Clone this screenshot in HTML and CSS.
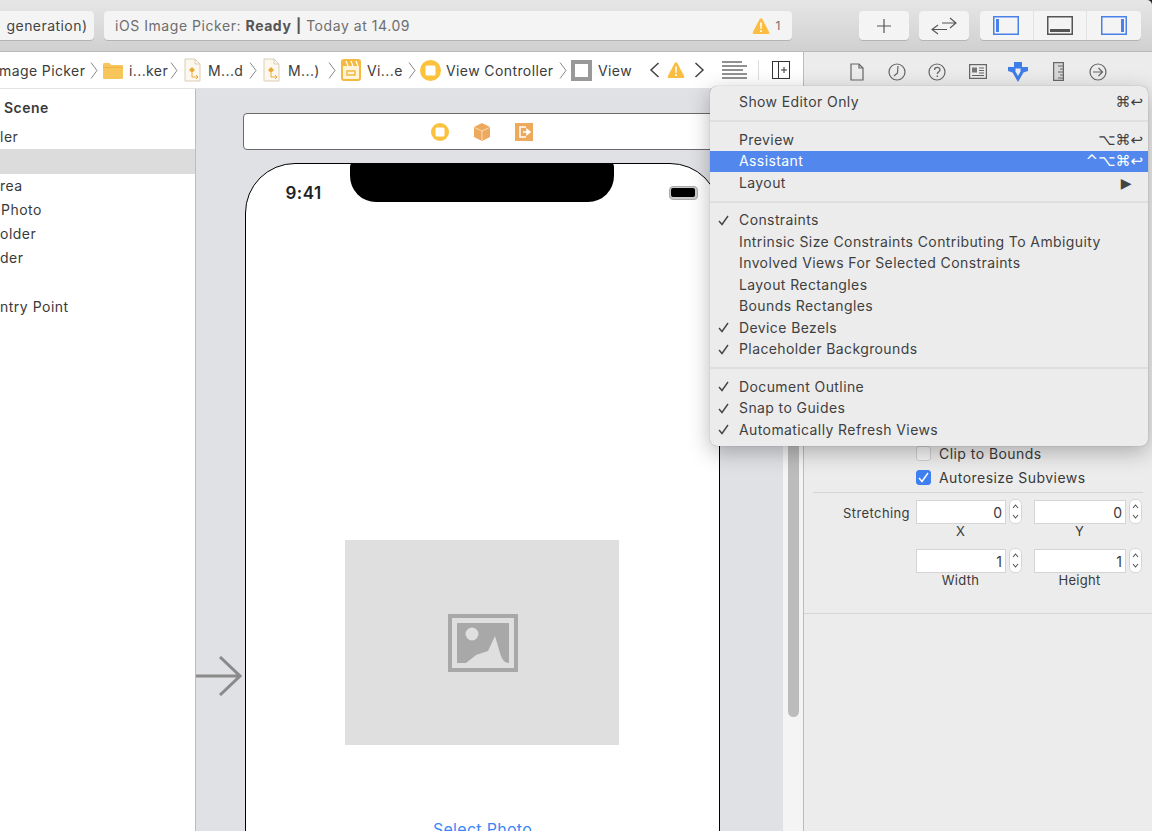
FILE: index.html
```html
<!DOCTYPE html>
<html lang="en">
<head>
  <meta charset="UTF-8">
  <title>Main.storyboard</title>
  <link rel="stylesheet" href="styles.css">
</head>
<body>
<svg class="defs" width="0" height="0">
  <symbol id="chev" viewBox="0 0 8 17"><path d="M1 .5l6 8-6 8" fill="none" stroke="#8a8a8a" stroke-width="1"/></symbol>
  <symbol id="warn" viewBox="0 0 18 18"><path d="M9 1.2c.6 0 1 .3 1.3.8l6.8 12.900c.5 1-.1 2.100-1.200 2.100H2.100c-1.100 0-1.700-1.100-1.200-2.100L7.700 2c.3-.5.700-.8 1.300-.8z" fill="#fbbd3f"/><path d="M8.100 5.500h1.800l-.3 6.500H8.400zM8.100 13.200h1.800v1.800H8.100z" fill="#fff"/></symbol>
  <symbol id="file" viewBox="0 0 17 24"><path d="M1 1h10l5 5v17H1z" fill="#fdf8ee" stroke="#d9cdb8"/><path d="M11 1v5h5" fill="none" stroke="#d9cdb8"/><path d="M8 9l3 3-3 3-3-3z" fill="#e9a93a"/><path d="M8 15v4h6M12 17l2 2-2 2" fill="none" stroke="#e9a93a" stroke-width="1"/></symbol>
  <symbol id="tick" viewBox="0 0 11 11"><path d="M1 6l3 3.500L10 1" fill="none" stroke="#444" stroke-width="1.400"/></symbol>
  <symbol id="updown" viewBox="0 0 13 25"><rect x=".5" y=".5" width="12" height="24" rx="5" fill="#fff" stroke="#d4d4d4"/><path d="M4 9l2.500-3L9 9M4 16l2.500 3L9 16" fill="none" stroke="#555" stroke-width="1.100"/></symbol>
</svg>

<div class="window">
  <header class="toolbar">
    <div class="tool-btn scheme">generation)</div>
    <div class="tool-btn status">
      <span>iOS Image Picker: <b>Ready</b> <b>|</b> Today at 14.09</span>
      <span class="status-warn"><svg width="18" height="18"><use href="#warn"/></svg><span>1</span></span>
    </div>
    <div class="tool-btn square">
      <svg width="18" height="18" viewBox="0 0 18 18"><path d="M9 2v14M2 9h14" stroke="#555" stroke-width="1.200"/></svg>
    </div>
    <div class="tool-btn square">
      <svg width="28" height="20" viewBox="0 0 28 20"><path d="M12 7h14M20 2l6 5-6 5M17 13.500H2M8 9L2 13.500 8 18" fill="none" stroke="#555" stroke-width="1.100"/></svg>
    </div>
    <div class="tool-btn view-group">
      <div class="view-cell">
        <svg width="26" height="19" viewBox="0 0 26 19"><rect x=".75" y=".75" width="24.500" height="17.500" fill="none" stroke="#4a80ea" stroke-width="1.500"/><rect x="3" y="3" width="3" height="13" fill="#4a80ea"/></svg>
      </div>
      <div class="view-cell">
        <svg width="26" height="19" viewBox="0 0 26 19"><rect x=".75" y=".75" width="24.500" height="17.500" fill="none" stroke="#555" stroke-width="1.500"/><rect x="3" y="13" width="20" height="3" fill="#555"/></svg>
      </div>
      <div class="view-cell">
        <svg width="26" height="19" viewBox="0 0 26 19"><rect x=".75" y=".75" width="24.500" height="17.500" fill="none" stroke="#4a80ea" stroke-width="1.500"/><rect x="20" y="3" width="3" height="13" fill="#4a80ea"/></svg>
      </div>
    </div>
  </header>

  <div class="workspace">
    <section class="editor">
      <nav class="jumpbar">
        <span class="crumb-first">mage Picker</span>
        <svg width="8" height="17"><use href="#chev"/></svg>
        <svg class="folder" width="20" height="17" viewBox="0 0 20 17"><path d="M0 2.500C0 1.500.5 1 1.500 1h5l1.500 2h10.500c1 0 1.500.5 1.500 1.500v11c0 1-.5 1.500-1.500 1.500h-17C.5 17 0 16.500 0 15.500z" fill="#f8c55a"/><path d="M0 5h20v1H0z" fill="#eeb443"/></svg>
        <span class="crumb-short">i...ker</span>
        <svg width="8" height="17"><use href="#chev"/></svg>
        <svg class="file" width="17" height="24"><use href="#file"/></svg>
        <span class="crumb-file">M...d</span>
        <svg width="8" height="17"><use href="#chev"/></svg>
        <svg class="file" width="17" height="24"><use href="#file"/></svg>
        <span class="crumb-file wide">M...)</span>
        <svg width="8" height="17"><use href="#chev"/></svg>
        <svg class="board" width="20" height="22" viewBox="0 0 20 22"><rect x="1" y="1" width="18" height="20" rx="2" fill="#fff4d8" stroke="#f4b93f" stroke-width="2"/><path d="M1 2h18v5H1z" fill="#f4b93f"/><path d="M5 2l2 5M10 2l2 5M15 2l2 5" stroke="#fff" stroke-width="1.200"/><rect x="6" y="12" width="8" height="4" fill="none" stroke="#f4b93f" stroke-width="1.500"/></svg>
        <span class="crumb-short">Vi...e</span>
        <svg width="8" height="17"><use href="#chev"/></svg>
        <svg class="vc" width="21" height="21" viewBox="0 0 21 21"><circle cx="10.500" cy="10.500" r="10.500" fill="#fcc23d"/><rect x="5.500" y="5.500" width="10" height="10" rx="1.500" fill="#fff"/></svg>
        <span class="crumb-vc">View Controller</span>
        <svg width="8" height="17"><use href="#chev"/></svg>
        <svg class="vc" width="21" height="21" viewBox="0 0 21 21"><rect width="21" height="21" fill="#999"/><rect x="4" y="4" width="13" height="13" fill="#fff"/></svg>
        <span class="crumb-view">View</span>
        <svg width="11" height="16" viewBox="0 0 11 16"><path d="M9.500 1L2 8l7.500 7" fill="none" stroke="#444" stroke-width="1.500"/></svg>
        <svg class="nav-w" width="18" height="18"><use href="#warn"/></svg>
        <svg class="nav-r" width="11" height="16" viewBox="0 0 11 16"><path d="M1.500 1L9 8l-7.500 7" fill="none" stroke="#444" stroke-width="1.500"/></svg>
        <svg class="lines" width="25" height="18" viewBox="0 0 25 18"><path d="M0 1h20M0 5h25M0 9h21M0 13h25M0 17h25" stroke="#222" stroke-width="1"/></svg>
        <span class="jump-sep"></span>
        <svg class="split" width="18" height="18" viewBox="0 0 18 18"><rect x=".5" y=".5" width="17" height="17" fill="none" stroke="#333"/><path d="M6.500 0v18M12 6v6M9 9h6" stroke="#333"/></svg>
      </nav>
      <div class="editor-body">
        <aside class="outline">
          <div class="outline-head">Scene</div>
          <div class="outline-row">ler</div>
          <div class="outline-row selected"></div>
          <div class="outline-row">rea</div>
          <div class="outline-row nudge">Photo</div>
          <div class="outline-row">older</div>
          <div class="outline-row">der</div>
          <div class="outline-row"></div>
          <div class="outline-row">ntry Point</div>
        </aside>
        <main class="canvas">
          <div class="scene-dock">
            <svg width="18" height="18" viewBox="0 0 18 18"><circle cx="9" cy="9" r="9" fill="#fcc23d"/><rect x="4.500" y="4.500" width="9" height="9" rx="1.500" fill="#fff"/></svg>
            <svg width="18" height="18" viewBox="0 0 18 18"><path d="M9 0l8 4v10l-8 4-8-4V4z" fill="#eda95c"/><path d="M1.500 4.500L9 8l7.500-3.500M9 8v9.500" fill="none" stroke="#f9dcb8" stroke-width="1"/></svg>
            <svg width="18" height="18" viewBox="0 0 18 18"><rect width="18" height="18" fill="#eda95c"/><path d="M11 4H5v10h6M8 9h7M12 6.500V11.500L15 9z" fill="none" stroke="#fff" stroke-width="1.500"/></svg>
          </div>
          <svg class="entry-arrow" width="46" height="40" viewBox="0 0 46 40"><path d="M0 20h44M24 1l20 19-20 19" fill="none" stroke="#8a8a8a" stroke-width="3"/></svg>
          <div class="phone">
            <div class="notch"></div>
            <div class="phone-time">9:41</div>
            <div class="battery"><span class="battery-fill"></span></div>
            <div class="image-view">
              <svg width="70" height="58" viewBox="0 0 70 58"><path d="M0 0h70v58H0zM4 4v50h62V4z" fill="#a8a8a8" fill-rule="evenodd"/><path d="M9 9h52v40H9z" fill="#a8a8a8"/><circle cx="24" cy="20" r="6.500" fill="#dfdfdf"/><path d="M9 49h9l10-8 12-4 7-15 5 17c2 7 5 10 9 10z" fill="#dfdfdf"/></svg>
            </div>
            <div class="select-photo">Select Photo</div>
          </div>
          <div class="scroll-track"><div class="scroll-thumb"></div></div>
        </main>
      </div>
    </section>

    <section class="inspector">
      <div class="inspector-tabs">
        <span class="tab"><svg width="16" height="18" viewBox="0 0 16 18"><path d="M2 1h8l4 4v12H2zM10 1v4h4" fill="none" stroke="#666" stroke-width="1.200"/></svg></span>
        <span class="tab"><svg width="18" height="18" viewBox="0 0 18 18"><circle cx="9" cy="9" r="8" fill="none" stroke="#666" stroke-width="1.200"/><path d="M10 3l-.5 7L6 13" fill="none" stroke="#666" stroke-width="1.200"/></svg></span>
        <span class="tab"><svg width="18" height="18" viewBox="0 0 18 18"><circle cx="9" cy="9" r="8" fill="none" stroke="#666" stroke-width="1.200"/><path d="M6.500 7c0-3.500 5.500-3.500 5.500-.3 0 2-2.700 2-2.700 4.300M9.300 12.500v1.500" fill="none" stroke="#666" stroke-width="1.300"/></svg></span>
        <span class="tab"><svg width="18" height="15" viewBox="0 0 18 15"><rect x=".6" y=".6" width="16.800" height="13.800" fill="none" stroke="#666" stroke-width="1.200"/><rect x="3" y="3.500" width="5" height="5" fill="#777"/><path d="M10 4h5M10 6.500h5M10 9h5M3 11.500h12" stroke="#666"/></svg></span>
        <span class="tab"><svg width="20" height="20" viewBox="0 0 20 20"><path d="M6 0h8v5h6v4l-4.500 1.500L10 20 4.500 10.500 0 9V5h6z" fill="#3f7de8"/><path d="M7.500 6.500h5v3L10 14 7.500 9.500z" fill="#ececec"/></svg></span>
        <span class="tab"><svg width="11" height="19" viewBox="0 0 11 19"><rect x=".6" y=".6" width="9.800" height="17.800" fill="#d8d8d8" stroke="#666" stroke-width="1.200"/><path d="M5 4h5M7 7h3M5 10h5M7 13h3M5 16h5" stroke="#666"/></svg></span>
        <span class="tab"><svg width="18" height="18" viewBox="0 0 18 18"><circle cx="9" cy="9" r="8" fill="none" stroke="#666" stroke-width="1.200"/><path d="M4 9h9M9.500 5l4 4-4 4" fill="none" stroke="#666" stroke-width="1.200"/></svg></span>
      </div>
      <div class="inspector-body">
        <div class="check-row"><span class="checkbox"></span>Clip to Bounds</div>
        <div class="check-row"><span class="checkbox on"><svg width="11" height="11"><use href="#tick" class="tick-white"/></svg></span>Autoresize Subviews</div>
        <div class="stretch">
          <div class="stretch-label">Stretching</div>
          <div class="field-pair">
            <div class="field"><div class="field-line"><span class="input">0</span><svg width="13" height="25"><use href="#updown"/></svg></div><div class="field-cap">X</div></div>
            <div class="field"><div class="field-line"><span class="input">0</span><svg width="13" height="25"><use href="#updown"/></svg></div><div class="field-cap">Y</div></div>
            <div class="field"><div class="field-line"><span class="input">1</span><svg width="13" height="25"><use href="#updown"/></svg></div><div class="field-cap">Width</div></div>
            <div class="field"><div class="field-line"><span class="input">1</span><svg width="13" height="25"><use href="#updown"/></svg></div><div class="field-cap">Height</div></div>
          </div>
        </div>
      </div>
    </section>
  </div>

  <div class="menu">
    <div class="menu-row"><span class="label">Show Editor Only</span><span class="keys">⌘↩</span></div>
    <div class="menu-sep"></div>
    <div class="menu-row"><span class="label">Preview</span><span class="keys">⌥⌘↩</span></div>
    <div class="menu-row active"><span class="label">Assistant</span><span class="keys">^⌥⌘↩</span></div>
    <div class="menu-row"><span class="label">Layout</span><span class="arrow">▶</span></div>
    <div class="menu-sep"></div>
    <div class="menu-row"><svg class="mark" width="11" height="11"><use href="#tick"/></svg><span class="label">Constraints</span></div>
    <div class="menu-row"><span class="label">Intrinsic Size Constraints Contributing To Ambiguity</span></div>
    <div class="menu-row"><span class="label">Involved Views For Selected Constraints</span></div>
    <div class="menu-row"><span class="label">Layout Rectangles</span></div>
    <div class="menu-row"><span class="label">Bounds Rectangles</span></div>
    <div class="menu-row"><svg class="mark" width="11" height="11"><use href="#tick"/></svg><span class="label">Device Bezels</span></div>
    <div class="menu-row"><svg class="mark" width="11" height="11"><use href="#tick"/></svg><span class="label">Placeholder Backgrounds</span></div>
    <div class="menu-sep"></div>
    <div class="menu-row"><svg class="mark" width="11" height="11"><use href="#tick"/></svg><span class="label">Document Outline</span></div>
    <div class="menu-row"><svg class="mark" width="11" height="11"><use href="#tick"/></svg><span class="label">Snap to Guides</span></div>
    <div class="menu-row"><svg class="mark" width="11" height="11"><use href="#tick"/></svg><span class="label">Automatically Refresh Views</span></div>
  </div>
</div>
</body>
</html>
```

FILE: styles.css
```css
* {
  margin: 0;
  padding: 0;
  box-sizing: border-box;
}

html, body {
  width: 1152px;
  height: 831px;
  overflow: hidden;
}

body {
  font-family: Inter, "Liberation Sans", sans-serif;
  font-size: 14px;
  color: #3a3a3a;
  background: #222;
}

.defs {
  position: absolute;
}

svg {
  display: block;
  flex: none;
}

.window {
  position: relative;
  width: 1152px;
  height: 831px;
  display: flex;
  flex-direction: column;
  overflow: hidden;
}

/* toolbar */
.toolbar {
  height: 52px;
  flex: none;
  display: flex;
  align-items: flex-start;
  padding-top: 11px;
  background: linear-gradient(#e6e6e6, #d0d0d0);
  border-bottom: 1px solid #b9b9b9;
  border-top-right-radius: 5px;
}

.tool-btn {
  height: 29px;
  background: #f4f4f4;
  border-radius: 4px;
  box-shadow: 0 1px 0 #b4b4b4;
  display: flex;
  align-items: center;
  justify-content: center;
}

.scheme {
  width: 104px;
  margin-left: -10px;
  padding-left: 10px;
  color: #444;
  letter-spacing: .45px;
}

.status {
  width: 688px;
  margin-left: 10px;
  padding: 0 11px;
  justify-content: space-between;
  color: #6e6e6e;
  letter-spacing: .55px;
}

.status b {
  color: #555;
}

.status-warn {
  display: flex;
  align-items: center;
  gap: 6px;
  font-size: 12px;
}

.square {
  width: 50px;
  margin-left: 10px;
}

.status + .square {
  margin-left: 67px;
}

.view-group {
  width: 161px;
  margin-left: 11px;
  justify-content: flex-start;
}

.view-cell {
  width: 53.700px;
  height: 29px;
  display: flex;
  align-items: center;
  justify-content: center;
  border-right: 1px solid #e2e2e2;
}

.view-cell:last-child {
  border-right: none;
}

/* editor */
.workspace {
  flex: 1;
  min-height: 0;
  display: flex;
}

.editor {
  width: 803px;
  flex: none;
  display: flex;
  flex-direction: column;
}

.jumpbar {
  height: 37px;
  flex: none;
  display: flex;
  align-items: center;
  background: #fff;
  border-bottom: 1px solid #e2e2e2;
  color: #3c3c3c;
  white-space: nowrap;
  letter-spacing: .4px;
}

.crumb-first { margin-left: -1px; width: 91px; flex: none; }
.folder { margin-left: 5px; }
.crumb-short { margin-left: 6px; width: 41px; flex: none; }
.file { margin-left: 6px; }
.crumb-file { margin-left: 7px; width: 41px; flex: none; }
.crumb-file.wide { margin-left: 8px; width: 40px; }
.board { margin-left: 5px; }
.vc { margin-left: 4px; }
.crumb-vc { margin-left: 5px; width: 113px; flex: none; }
.crumb-view { margin-left: 6px; width: 51px; flex: none; }
.nav-w { margin-left: 7px; }
.nav-r { margin-left: 9px; }
.lines { margin-left: 17px; }
.split { margin-left: 13px; }

.jump-sep {
  width: 1px;
  height: 20px;
  margin-left: 11px;
  flex: none;
  background: #ddd;
}

.editor-body {
  flex: 1;
  min-height: 0;
  display: flex;
}

.outline {
  width: 196px;
  flex: none;
  padding-top: 7px;
  background: #fff;
  border-right: 1px solid #bdbdbd;
  letter-spacing: .5px;
}

.outline-head {
  height: 29px;
  padding-left: 4px;
  font-weight: 600;
  line-height: 24px;
}

.outline-row {
  height: 24.300px;
  line-height: 24px;
  white-space: nowrap;
}

.outline-row.selected {
  background: #dcdcdc;
}

.nudge {
  padding-left: 1px;
}

.canvas {
  position: relative;
  flex: 1;
  overflow: hidden;
  background: #e0e1e5;
}

.scene-dock {
  position: absolute;
  left: 47px;
  top: 24px;
  width: 480px;
  height: 37px;
  padding-right: 2px;
  display: flex;
  align-items: center;
  justify-content: center;
  gap: 24px;
  background: #fff;
  border: 1px solid #6a6a6a;
  border-radius: 4px;
}

.entry-arrow {
  position: absolute;
  left: 0;
  top: 567px;
}

.phone {
  position: absolute;
  left: 49px;
  top: 74px;
  width: 475px;
  height: 760px;
  background: #fff;
  border: 1.500px solid #000;
  border-radius: 50px 50px 0 0;
}

.notch {
  position: absolute;
  left: 103.500px;
  top: -1px;
  width: 264px;
  height: 39px;
  background: #000;
  border-radius: 4px 4px 26px 26px;
}

.phone-time {
  position: absolute;
  left: 39.500px;
  top: 18.500px;
  font-size: 17px;
  font-weight: 600;
  letter-spacing: .5px;
  color: #222;
}

.battery {
  position: absolute;
  left: 422.500px;
  top: 21.500px;
  width: 29px;
  height: 14px;
  padding: 1.500px;
  background: #ccc;
  border: 1px solid #aaa;
  border-radius: 4px;
}

.battery-fill {
  display: block;
  height: 100%;
  background: #000;
  border-radius: 2px;
}

.image-view {
  position: absolute;
  left: 98.500px;
  top: 375.500px;
  width: 274px;
  height: 205px;
  display: flex;
  align-items: center;
  justify-content: center;
  padding: 2px 0 0 2px;
  background: #dfdfdf;
}

.select-photo {
  position: absolute;
  left: 0;
  right: 0;
  top: 654.500px;
  text-align: center;
  font-size: 16px;
  letter-spacing: .3px;
  color: #3b87f5;
}

.scroll-track {
  position: absolute;
  right: 0;
  top: 0;
  bottom: 0;
  width: 20px;
  padding: 0 4px 0 5px;
  background: #f4f4f4;
}

.scroll-thumb {
  height: 628px;
  background: #bcbcbc;
  border-radius: 0 0 6px 6px;
}

/* inspector */
.inspector {
  flex: 1;
  display: flex;
  flex-direction: column;
  background: #ececec;
  border-left: 1px solid #bdbdbd;
}

.inspector-tabs {
  height: 37px;
  flex: none;
  padding: 2px 0 0 33px;
  display: flex;
  align-items: center;
}

.tab {
  width: 40.200px;
  display: flex;
  justify-content: center;
}

.inspector-body {
  padding: 352px 9px 16px 9px;
  border-bottom: 1px solid #d6d6d6;
}

.check-row {
  height: 24px;
  padding-left: 103px;
  display: flex;
  align-items: center;
  gap: 8px;
  letter-spacing: .45px;
}

.checkbox {
  width: 15px;
  height: 15px;
  display: flex;
  align-items: center;
  justify-content: center;
  background: #f6f6f6;
  border: 1px solid #cfcfcf;
  border-radius: 3px;
}

.checkbox.on {
  background: #3f7ff0;
  border-color: #3f7ff0;
}

.tick-white {
  filter: brightness(9);
}

.stretch {
  margin-top: 3px;
  padding-top: 6px;
  display: flex;
  border-top: 1px solid #d4d4d4;
}

.stretch-label {
  width: 97px;
  padding-top: 6px;
  text-align: right;
  font-size: 13px;
  letter-spacing: .4px;
}

.field-pair {
  margin-left: 6px;
  display: grid;
  grid-template-columns: 106px 108px;
  column-gap: 12px;
}

.field {
  height: 49px;
}

.field-line {
  display: flex;
  align-items: center;
  gap: 3px;
}

.input {
  flex: 1;
  height: 24px;
  padding-right: 3px;
  line-height: 23px;
  text-align: right;
  background: #fff;
  border: 1px solid #d4d4d4;
}

.field-cap {
  padding-right: 17px;
  line-height: 17px;
  margin-top: -1px;
  text-align: center;
  font-size: 13px;
  letter-spacing: .3px;
}

/* dropdown */
.menu {
  position: absolute;
  left: 710px;
  top: 86px;
  width: 438px;
  height: 360px;
  padding: 5.500px 0;
  background: #ececed;
  border-radius: 7px;
  box-shadow: 0 6px 22px rgba(0, 0, 0, .28), 0 0 1px rgba(0, 0, 0, .4);
  letter-spacing: .4px;
  color: #3f3f3f;
}

.menu-row {
  position: relative;
  height: 21.500px;
  padding: 0 5px 0 29px;
  display: flex;
  align-items: center;
  justify-content: space-between;
}

.menu-row .label {
  position: relative;
  top: -.5px;
}

.menu-row.active {
  background: #5288ee;
  color: #fff;
}

.menu-sep {
  height: 2px;
  margin: 7px 0;
  background: #dfdfdf;
}

.mark {
  position: absolute;
  left: 8px;
  top: 5px;
}

.keys {
  font-family: "DejaVu Sans", sans-serif;
  font-size: 15px;
  letter-spacing: 0;
}

.arrow {
  margin-right: 11px;
  font-family: "DejaVu Sans", sans-serif;
  font-size: 14px;
  color: #444;
}
```
